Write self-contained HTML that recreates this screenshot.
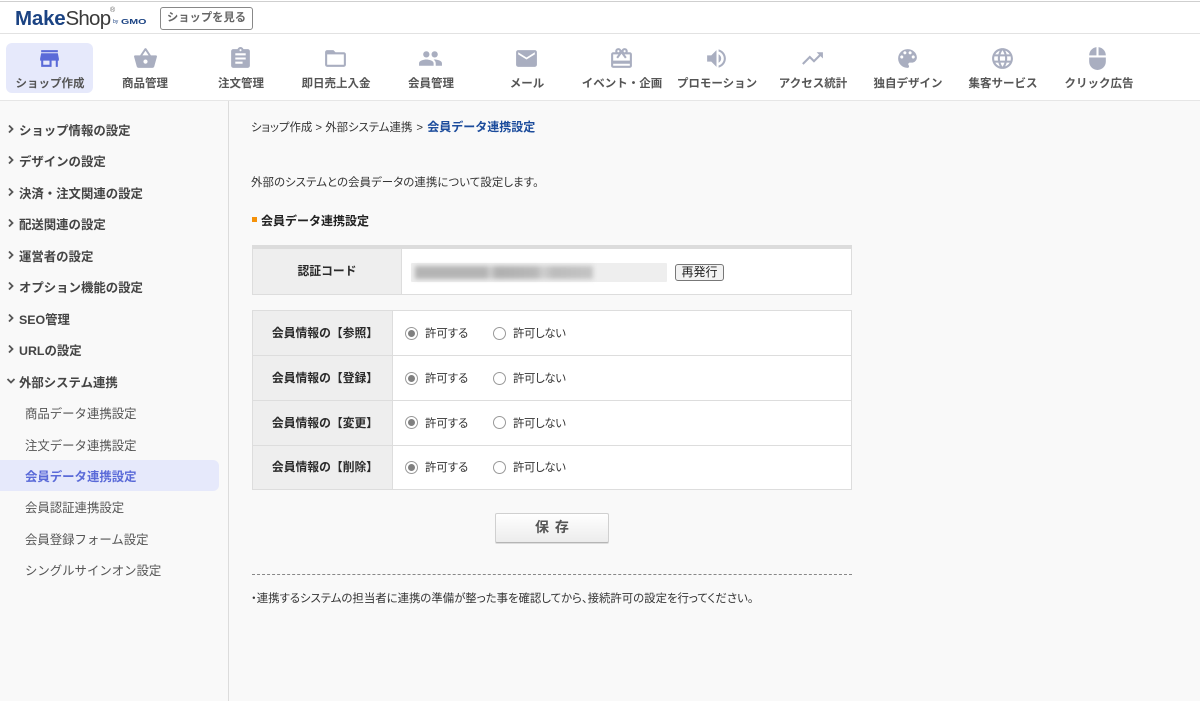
<!DOCTYPE html>
<html lang="ja"><head><meta charset="utf-8"><title>会員データ連携設定</title>
<style>
html,body{margin:0;padding:0}
body{width:1200px;height:701px;overflow:hidden;position:relative;background:#f9f9f9;font-family:"Liberation Sans","Noto Sans CJK JP",sans-serif;color:#333}
.a{position:absolute;white-space:nowrap}
.box{position:absolute;box-sizing:border-box}
.ic{position:absolute;width:25px;height:25px;top:46px;fill:#a9aec0}
.nl{position:absolute;top:75px;width:100px;text-align:center;font-size:11.5px;font-weight:700;line-height:18px;color:#555;white-space:nowrap}
.s{position:absolute;left:19px;font-size:12.4px;font-weight:700;line-height:18px;color:#444;white-space:nowrap}
.sub{position:absolute;left:25px;font-size:12.4px;line-height:18px;color:#555;white-space:nowrap}
.ch{position:absolute;left:6px;width:10px;height:10px}
.t{position:absolute;font-size:11.4px;line-height:18px;color:#333;white-space:nowrap;font-feature-settings:"palt"}
.th{position:absolute;font-size:11.8px;font-weight:700;line-height:18px;color:#2a2a2a;text-align:center;white-space:nowrap}
.r{position:absolute;width:13px;height:13px;border:1px solid #999;border-radius:50%;background:#fff;box-sizing:border-box}
.r.on::after{content:"";position:absolute;left:2px;top:2px;width:7px;height:7px;border-radius:50%;background:#808080}
.n{letter-spacing:-.35px}
</style></head><body>

<div class="box" style="left:0;top:0;width:1200px;height:34px;background:#fff;border-bottom:1px solid #e2e2e2"></div>
<div class="box" style="left:0;top:1px;width:1200px;height:1px;background:#cfcfcf"></div>
<div class="a" style="left:15px;top:7px;font-size:20.5px;line-height:24px;letter-spacing:-.2px;color:#3a3a3a"><b style="color:#1b4383">Make</b><span style="letter-spacing:-.75px">Shop</span></div>
<div class="a" style="left:110px;top:7px;font-size:7px;line-height:8px;color:#666">®</div>
<div class="a" style="left:113px;top:18px;font-size:5px;line-height:8px;color:#1b4383">by</div>
<div class="a" style="left:121px;top:17px;font-size:7.5px;line-height:10px;font-weight:700;color:#1b4383;transform:scaleX(1.42);transform-origin:left">GMO</div>
<div class="box" style="left:160px;top:7px;width:93px;height:23px;border:1px solid #888;border-radius:3px;background:#fff;text-align:center;font-size:11.3px;font-weight:700;line-height:21px;color:#666">ショップを見る</div>

<div class="box" style="left:0;top:34px;width:1200px;height:67px;background:#fff;border-bottom:1px solid #e6e6e6"></div>
<div class="box" style="left:6px;top:43px;width:87px;height:50px;background:#e6e9fb;border-radius:6px"></div>

<svg class="ic" style="left:37px;fill:#5a6ad8" viewBox="0 0 24 24"><path d="M20 4H4v2h16V4zm1 10v-2l-1-5H4l-1 5v2h1v6h10v-6h4v6h2v-6h1zm-9 4H6v-4h6v4z"/></svg>
<svg class="ic" style="left:133px" viewBox="0 0 24 24"><path d="M17.21 9l-4.38-6.56c-.19-.28-.51-.42-.83-.42-.32 0-.64.14-.83.43L6.79 9H2c-.55 0-1 .45-1 1 0 .09.01.18.04.27l2.54 9.27c.23.84 1 1.46 1.92 1.46h13c.92 0 1.69-.62 1.93-1.46l2.54-9.27L23 10c0-.55-.45-1-1-1h-4.79zM9 9l3-4.4L15 9H9zm3 8c-1.1 0-2-.9-2-2s.9-2 2-2 2 .9 2 2-.9 2-2 2z"/></svg>
<svg class="ic" style="left:228px" viewBox="0 0 24 24"><path d="M19 3h-4.18C14.4 1.84 13.3 1 12 1c-1.3 0-2.4.84-2.82 2H5c-1.1 0-2 .9-2 2v14c0 1.1.9 2 2 2h14c1.1 0 2-.9 2-2V5c0-1.1-.9-2-2-2zm-7 0c.55 0 1 .45 1 1s-.45 1-1 1-1-.45-1-1 .45-1 1-1zm2 14H7v-2h7v2zm3-4H7v-2h10v2zm0-4H7V7h10v2z"/></svg>
<svg class="ic" style="left:323px" viewBox="0 0 24 24"><path d="M20 6h-8l-2-2H4c-1.1 0-1.99.9-1.99 2L2 18c0 1.1.9 2 2 2h16c1.1 0 2-.9 2-2V8c0-1.1-.9-2-2-2zm0 12H4V8h16v10z"/></svg>
<svg class="ic" style="left:418px" viewBox="0 0 24 24"><path d="M16 11c1.66 0 2.99-1.34 2.99-3S17.66 5 16 5c-1.66 0-3 1.34-3 3s1.34 3 3 3zm-8 0c1.66 0 2.99-1.34 2.99-3S9.66 5 8 5C6.34 5 5 6.34 5 8s1.34 3 3 3zm0 2c-2.33 0-7 1.17-7 3.5V19h14v-2.5c0-2.33-4.67-3.5-7-3.5zm8 0c-.29 0-.62.02-.97.05 1.16.84 1.97 1.97 1.97 3.45V19h6v-2.5c0-2.33-4.67-3.5-7-3.5z"/></svg>
<svg class="ic" style="left:514px" viewBox="0 0 24 24"><path d="M20 4H4c-1.1 0-1.99.9-1.99 2L2 18c0 1.1.9 2 2 2h16c1.1 0 2-.9 2-2V6c0-1.1-.9-2-2-2zm0 4l-8 5-8-5V6l8 5 8-5v2z"/></svg>
<svg class="ic" style="left:609px" viewBox="0 0 24 24"><path d="M20 6h-2.18c.11-.31.18-.65.18-1 0-1.66-1.34-3-3-3-1.05 0-1.96.54-2.5 1.35l-.5.67-.5-.68C10.96 2.54 10.05 2 9 2 7.34 2 6 3.34 6 5c0 .35.07.69.18 1H4c-1.11 0-1.99.89-1.99 2L2 19c0 1.11.89 2 2 2h16c1.11 0 2-.89 2-2V8c0-1.11-.89-2-2-2zm-5-2c.55 0 1 .45 1 1s-.45 1-1 1-1-.45-1-1 .45-1 1-1zM9 4c.55 0 1 .45 1 1s-.45 1-1 1-1-.45-1-1 .45-1 1-1zm11 15H4v-2h16v2zm0-5H4V8h5.08L7 10.83 8.62 12 11 8.76l1-1.36 1 1.36L15.38 12 17 10.83 14.92 8H20v6z"/></svg>
<svg class="ic" style="left:704px" viewBox="0 0 24 24"><path d="M3 9v6h4l5 5V4L7 9H3zm13.5 3c0-1.77-1.02-3.29-2.5-4.03v8.05c1.48-.73 2.5-2.25 2.5-4.02zM14 3.23v2.06c2.89.86 5 3.54 5 6.71s-2.11 5.85-5 6.71v2.06c4.01-.91 7-4.49 7-8.77s-2.99-7.86-7-8.77z"/></svg>
<svg class="ic" style="left:800px" viewBox="0 0 24 24"><path d="M16 6l2.29 2.29-4.88 4.88-4-4L2 16.59 3.41 18l6-6 4 4 6.3-6.29L22 12V6z"/></svg>
<svg class="ic" style="left:895px" viewBox="0 0 24 24"><path d="M12 3c-4.97 0-9 4.03-9 9s4.03 9 9 9c.83 0 1.5-.67 1.5-1.5 0-.39-.15-.74-.39-1.01-.23-.26-.38-.61-.38-.99 0-.83.67-1.5 1.5-1.5H16c2.76 0 5-2.24 5-5 0-4.42-4.03-8-9-8zm-5.5 9c-.83 0-1.5-.67-1.5-1.5S5.67 9 6.5 9 8 9.67 8 10.5 7.33 12 6.5 12zm3-4C8.67 8 8 7.33 8 6.5S8.67 5 9.5 5s1.5.67 1.5 1.5S10.33 8 9.5 8zm5 0c-.83 0-1.5-.67-1.5-1.5S13.67 5 14.5 5s1.5.67 1.5 1.5S15.33 8 14.5 8zm3 4c-.83 0-1.5-.67-1.5-1.5S16.67 9 17.5 9s1.5.67 1.5 1.5-.67 1.5-1.5 1.5z"/></svg>
<svg class="ic" style="left:990px" viewBox="0 0 24 24"><path d="M11.99 2C6.47 2 2 6.48 2 12s4.47 10 9.99 10C17.52 22 22 17.52 22 12S17.52 2 11.99 2zm6.93 6h-2.95c-.32-1.25-.78-2.45-1.38-3.56 1.84.63 3.37 1.91 4.33 3.56zM12 4.04c.83 1.2 1.48 2.53 1.91 3.96h-3.82c.43-1.43 1.08-2.76 1.91-3.96zM4.26 14C4.1 13.36 4 12.69 4 12s.1-1.36.26-2h3.38c-.08.66-.14 1.32-.14 2 0 .68.06 1.34.14 2H4.26zm.82 2h2.95c.32 1.25.78 2.45 1.38 3.56-1.84-.63-3.37-1.9-4.33-3.56zm2.95-8H5.08c.96-1.66 2.49-2.93 4.33-3.56C8.81 5.55 8.35 6.75 8.03 8zM12 19.96c-.83-1.2-1.48-2.53-1.91-3.96h3.82c-.43 1.43-1.08 2.76-1.91 3.96zM14.34 14H9.66c-.09-.66-.16-1.32-.16-2 0-.68.07-1.35.16-2h4.68c.09.65.16 1.32.16 2 0 .68-.07 1.34-.16 2zm.25 5.56c.6-1.11 1.06-2.31 1.38-3.56h2.95c-.96 1.65-2.49 2.93-4.33 3.56zM16.36 14c.08-.66.14-1.32.14-2 0-.68-.06-1.34-.14-2h3.38c.16.64.26 1.31.26 2s-.1 1.36-.26 2h-3.38z"/></svg>
<svg class="ic" style="left:1085px" viewBox="0 0 24 24"><path d="M13 1.07V9h7c0-4.08-3.05-7.44-7-7.93zM4 15c0 4.42 3.58 8 8 8s8-3.58 8-8v-4H4v4zm7-13.93C7.05 1.56 4 4.92 4 9h7V1.07z"/></svg>

<div class="nl" style="left:0">ショップ作成</div>
<div class="nl" style="left:95px">商品管理</div>
<div class="nl" style="left:191px">注文管理</div>
<div class="nl" style="left:286px">即日売上入金</div>
<div class="nl" style="left:381px">会員管理</div>
<div class="nl" style="left:477px">メール</div>
<div class="nl" style="left:572px">イベント・企画</div>
<div class="nl" style="left:667px">プロモーション</div>
<div class="nl" style="left:763px">アクセス統計</div>
<div class="nl" style="left:858px">独自デザイン</div>
<div class="nl" style="left:953px">集客サービス</div>
<div class="nl" style="left:1049px">クリック広告</div>

<div class="box" style="left:228px;top:101px;width:1px;height:600px;background:#dcdcdc"></div>

<svg class="ch" style="top:124px" viewBox="0 0 10 10"><path d="M3 1.5L6.5 5 3 8.5" fill="none" stroke="#555" stroke-width="1.8"/></svg>
<svg class="ch" style="top:155px" viewBox="0 0 10 10"><path d="M3 1.5L6.5 5 3 8.5" fill="none" stroke="#555" stroke-width="1.8"/></svg>
<svg class="ch" style="top:187px" viewBox="0 0 10 10"><path d="M3 1.5L6.5 5 3 8.5" fill="none" stroke="#555" stroke-width="1.8"/></svg>
<svg class="ch" style="top:218px" viewBox="0 0 10 10"><path d="M3 1.5L6.5 5 3 8.5" fill="none" stroke="#555" stroke-width="1.8"/></svg>
<svg class="ch" style="top:250px" viewBox="0 0 10 10"><path d="M3 1.5L6.5 5 3 8.5" fill="none" stroke="#555" stroke-width="1.8"/></svg>
<svg class="ch" style="top:281px" viewBox="0 0 10 10"><path d="M3 1.5L6.5 5 3 8.5" fill="none" stroke="#555" stroke-width="1.8"/></svg>
<svg class="ch" style="top:313px" viewBox="0 0 10 10"><path d="M3 1.5L6.5 5 3 8.5" fill="none" stroke="#555" stroke-width="1.8"/></svg>
<svg class="ch" style="top:344px" viewBox="0 0 10 10"><path d="M3 1.5L6.5 5 3 8.5" fill="none" stroke="#555" stroke-width="1.8"/></svg>
<svg class="ch" style="top:376px" viewBox="0 0 10 10"><path d="M1.5 3L5 6.5 8.5 3" fill="none" stroke="#555" stroke-width="1.8"/></svg>

<div class="s" style="top:122px">ショップ情報の設定</div>
<div class="s" style="top:153px">デザインの設定</div>
<div class="s" style="top:185px">決済・注文関連の設定</div>
<div class="s" style="top:216px">配送関連の設定</div>
<div class="s" style="top:248px">運営者の設定</div>
<div class="s" style="top:279px">オプション機能の設定</div>
<div class="s" style="top:311px">SEO管理</div>
<div class="s" style="top:342px">URLの設定</div>
<div class="s" style="top:374px">外部システム連携</div>
<div class="sub" style="top:405px">商品データ連携設定</div>
<div class="sub" style="top:437px">注文データ連携設定</div>
<div class="box" style="left:0;top:460px;width:219px;height:31px;background:#e6e9fb;border-radius:0 6px 6px 0"></div>
<div class="sub" style="top:468px;color:#5a6ad8;font-weight:700">会員データ連携設定</div>
<div class="sub" style="top:499px">会員認証連携設定</div>
<div class="sub" style="top:531px">会員登録フォーム設定</div>
<div class="sub" style="top:562px">シングルサインオン設定</div>

<div class="t" style="left:251px;top:118px">ショップ作成 &gt; 外部システム連携<span style="margin-left:1px"> &gt; </span><b style="color:#1c4c9c;font-size:12px;font-feature-settings:normal;margin-left:1px">会員データ連携設定</b></div>
<div class="t" style="left:251px;top:174px;letter-spacing:.11px">外部のシステムとの会員データの連携について設定します。</div>
<div class="box" style="left:252px;top:217px;width:5px;height:5px;background:#f5920a"></div>
<div class="a" style="left:261px;top:212px;font-size:12px;font-weight:700;line-height:18px;color:#222">会員データ連携設定</div>

<div class="box" style="left:252px;top:245px;width:600px;height:50px;background:#fff;border:1px solid #ddd;border-top:4px solid #dcdcdc"></div>
<div class="box" style="left:253px;top:249px;width:149px;height:45px;background:#eee;border-right:1px solid #ddd"></div>
<div class="th" style="left:253px;top:262px;width:148px">認証コード</div>
<div class="box" style="left:411px;top:263px;width:256px;height:19px;background:#eee;border-radius:1px"></div>
<div class="box" style="left:415px;top:266px;width:178px;height:13px;background:linear-gradient(90deg,#b4b4b4 0,#b4b4b4 40%,#cfcfcf 42%,#b0b0b0 46%,#b8b8b8 68%,#d0d0d0 72%,#bcbcbc 78%,#c4c4c4 100%);filter:blur(2.5px)"></div>
<div class="box" style="left:675px;top:264px;width:49px;height:17px;background:#f2f2f2;border:1px solid #777;border-radius:3px;text-align:center;font-size:12px;line-height:15px;color:#222">再発行</div>

<div class="box" style="left:252px;top:310px;width:600px;height:180px;background:#fff;border:1px solid #ddd"></div>
<div class="box" style="left:253px;top:311px;width:140px;height:178px;background:#eee;border-right:1px solid #ddd"></div>
<div class="box" style="left:253px;top:355px;width:598px;height:1px;background:#ddd"></div>
<div class="box" style="left:253px;top:400px;width:598px;height:1px;background:#ddd"></div>
<div class="box" style="left:253px;top:445px;width:598px;height:1px;background:#ddd"></div>

<div class="th" style="left:255.5px;top:324px;width:139px">会員情報の【参照】</div>
<div class="r on" style="left:405px;top:327px"></div><div class="t" style="left:425px;top:325px">許可する</div>
<div class="r" style="left:493px;top:327px"></div><div class="t n" style="left:513px;top:325px">許可しない</div>

<div class="th" style="left:255.5px;top:369px;width:139px">会員情報の【登録】</div>
<div class="r on" style="left:405px;top:372px"></div><div class="t" style="left:425px;top:370px">許可する</div>
<div class="r" style="left:493px;top:372px"></div><div class="t n" style="left:513px;top:370px">許可しない</div>

<div class="th" style="left:255.5px;top:414px;width:139px">会員情報の【変更】</div>
<div class="r on" style="left:405px;top:416px"></div><div class="t" style="left:425px;top:415px">許可する</div>
<div class="r" style="left:493px;top:416px"></div><div class="t n" style="left:513px;top:415px">許可しない</div>

<div class="th" style="left:255.5px;top:458px;width:139px">会員情報の【削除】</div>
<div class="r on" style="left:405px;top:461px"></div><div class="t" style="left:425px;top:459px">許可する</div>
<div class="r" style="left:493px;top:461px"></div><div class="t n" style="left:513px;top:459px">許可しない</div>

<div class="box" style="left:495px;top:513px;width:114px;height:30px;background:linear-gradient(#fff,#ececec);border:1px solid #d0d0d0;border-bottom:1px solid #b5b5b5;border-radius:2px;box-shadow:0 1px 0 #ddd;text-align:center;font-size:14px;font-weight:700;line-height:27px;color:#555;word-spacing:2px">保 存</div>

<div class="box" style="left:252px;top:574px;width:600px;height:1px;border-top:1px dashed #888"></div>
<div class="t" style="left:251px;top:590px">・連携するシステムの担当者に連携の準備が整った事を確認してから、接続許可の設定を行ってください。</div>
</body></html>
